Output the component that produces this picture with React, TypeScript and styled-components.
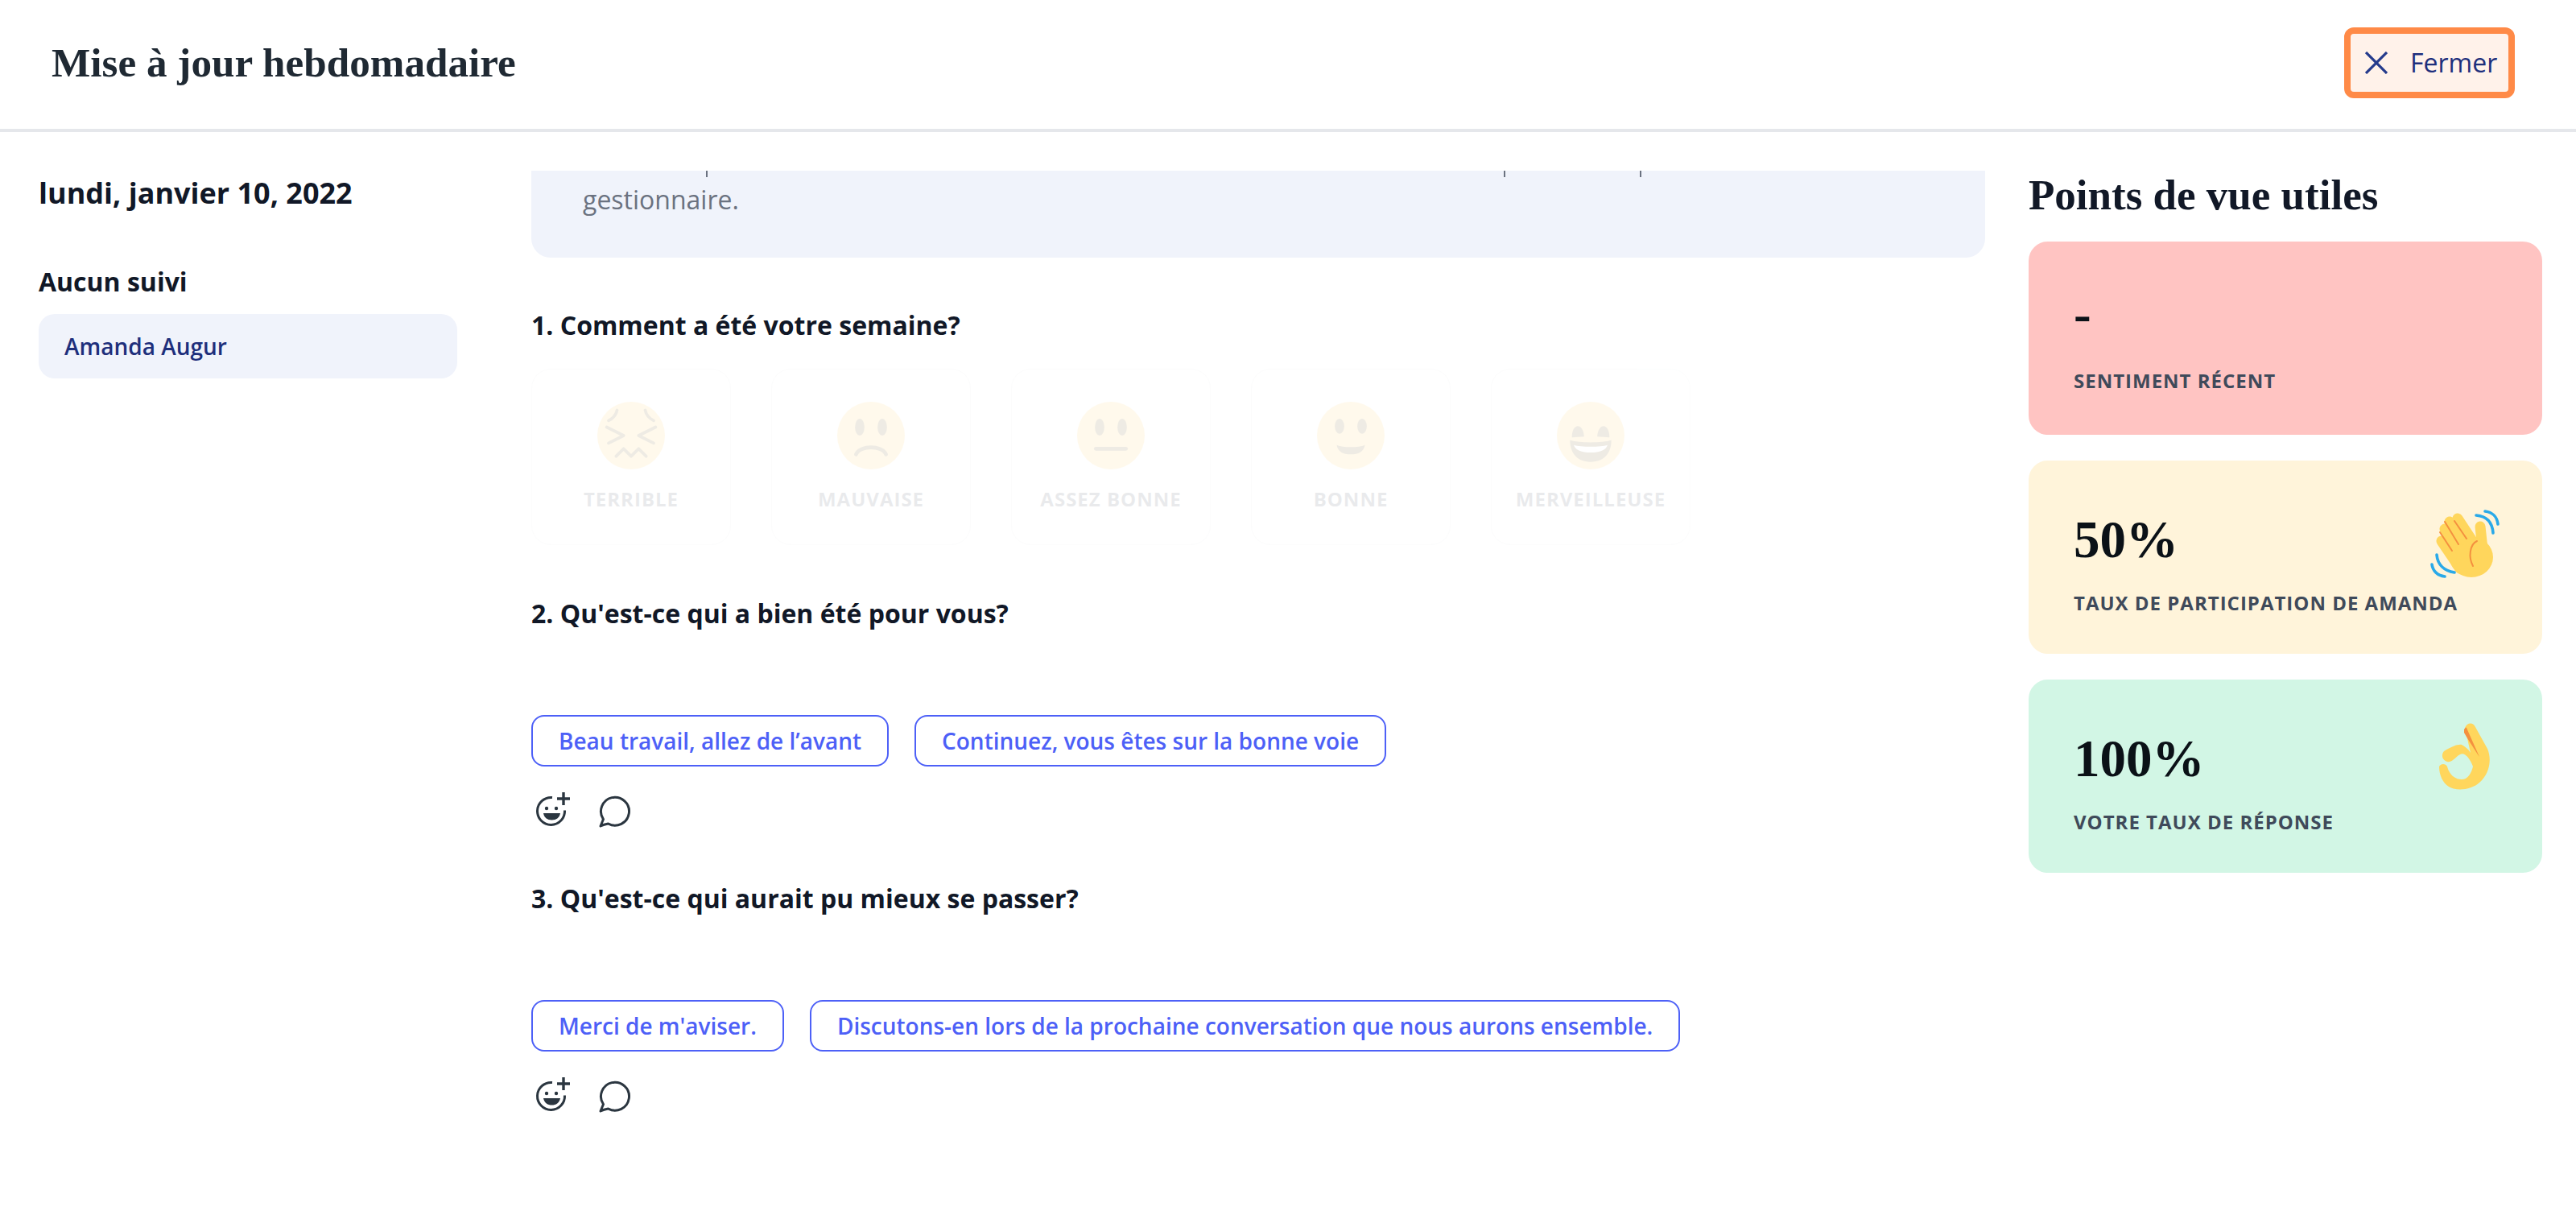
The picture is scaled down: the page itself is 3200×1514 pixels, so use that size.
import React from 'react';
import styled, { createGlobalStyle } from 'styled-components';

const GlobalStyle = createGlobalStyle`
    * {
        box-sizing: border-box;
    }
    html, body {
        margin: 0;
        padding: 0;
        background: #ffffff;
        font-family: "Open Sans", "Noto Sans", sans-serif;
        color: #111827;
    }
`;

const SERIF = `"Liberation Serif", "Times New Roman", serif`;
const NAVY = '#1e2f7c';
const INK = '#2b3640';
const CHIP_BLUE = '#4d60f7';

const Page = styled.div`
    width: 100%;
    height: 1514px;
    overflow: hidden;
    background: #ffffff;
`;

const Header = styled.header`
    display: flex;
    flex-direction: row;
    align-items: center;
    justify-content: space-between;
    height: 164px;
    padding: 0 76px 4px 64px;
    border-bottom: 4px solid #e5e7eb;
`;

const PageTitle = styled.h1`
    margin: 0;
    font-family: ${SERIF};
    font-size: 51.2px;
    font-weight: 700;
    line-height: 64px;
    color: #1f2933;
`;

const CloseButton = styled.button`
    display: flex;
    flex-direction: row;
    align-items: center;
    gap: 28px;
    width: 212px;
    height: 88px;
    padding: 0 0 0 18px;
    border: 8px solid #ff8a47;
    border-radius: 12px;
    background: #fff2ea;
    color: ${NAVY};
    font-family: inherit;
    font-size: 32px;
    font-weight: 500;
    line-height: 44px;
`;

const Main = styled.main`
    display: grid;
    grid-template-columns: 520px 1898px 692px;
    padding-left: 48px;
`;

const Sidebar = styled.aside`
    display: flex;
    flex-direction: column;
    padding-top: 52px;
`;

const DateHeading = styled.h2`
    margin: 0 0 64px;
    font-size: 36px;
    line-height: 48px;
    font-weight: 700;
    color: #111827;
`;

const SectionLabel = styled.h3`
    margin: 0 0 18px;
    font-size: 32px;
    line-height: 44px;
    font-weight: 700;
    color: #111827;
`;

const NameRow = styled.div`
    display: flex;
    align-items: center;
    height: 80px;
    padding: 0 32px;
    border-radius: 20px;
    background: #f0f3fb;
    color: ${NAVY};
    font-size: 28px;
    font-weight: 600;
`;

const Center = styled.section`
    display: flex;
    flex-direction: column;
    margin-left: 92px;
    padding-top: 48px;
`;

const Notice = styled.div`
    height: 108px;
    border-radius: 0 0 24px 24px;
    background: #f0f3fb;
    margin-bottom: 62px;
    color: #6b7280;
`;

const ClippedLine = styled.div`
    display: flex;
    flex-direction: row;
    height: 8px;
`;

const Descender = styled.span<{ $offset: number }>`
    width: 2px;
    height: 8px;
    margin-left: ${(p) => p.$offset}px;
    background: #6b7280;
`;

const NoticeText = styled.p`
    margin: 6px 0 0 64px;
    font-size: 32px;
    line-height: 44px;
    font-weight: 400;
`;

const Question = styled.h3<{ $gap: number }>`
    margin: 0 0 ${(p) => p.$gap}px;
    font-size: 32px;
    line-height: 44px;
    font-weight: 700;
    color: #111827;
`;

const MoodRow = styled.div`
    display: flex;
    flex-direction: row;
    gap: 50px;
    margin-bottom: 63px;
    opacity: 0.1;
`;

const MoodCard = styled.div`
    display: flex;
    flex-direction: column;
    align-items: center;
    width: 248px;
    height: 219px;
    padding-top: 40px;
    border: 1px solid #e5e7eb;
    border-radius: 24px;
`;

const MoodLabel = styled.span`
    margin-top: 20px;
    font-size: 24px;
    line-height: 34px;
    font-weight: 700;
    letter-spacing: 1px;
    text-transform: uppercase;
    color: #374151;
    white-space: nowrap;
`;

const ChipRow = styled.div`
    display: flex;
    flex-direction: row;
    gap: 32px;
    margin-bottom: 32px;
`;

const Chip = styled.button`
    height: 64px;
    padding: 0 32px;
    border: 2px solid ${CHIP_BLUE};
    border-radius: 16px;
    background: #ffffff;
    color: ${CHIP_BLUE};
    font-family: inherit;
    font-size: 28px;
    font-weight: 600;
    white-space: nowrap;
`;

const ActionRow = styled.div`
    display: flex;
    flex-direction: row;
    gap: 36px;
    height: 44px;
    padding-left: 4px;
    margin-bottom: 66px;
`;

const Insights = styled.aside`
    display: flex;
    flex-direction: column;
    gap: 32px;
    margin-left: 54px;
    width: 638px;
    padding-top: 46px;
`;

const InsightsTitle = styled.h2`
    margin: 0 0 -6px;
    font-family: ${SERIF};
    font-size: 53px;
    line-height: 64px;
    font-weight: 700;
    color: #111827;
`;

const InsightCard = styled.div<{ $bg: string }>`
    position: relative;
    display: flex;
    flex-direction: column;
    height: 240px;
    padding: 62px 56px 0;
    border-radius: 24px;
    background: ${(p) => p.$bg};
`;

const InsightValue = styled.div<{ $dash?: boolean }>`
    height: ${(p) => (p.$dash ? 68 : 72)}px;
    margin-top: ${(p) => (p.$dash ? -8 : 0)}px;
    margin-bottom: ${(p) => (p.$dash ? 8 : 0)}px;
    font-family: ${SERIF};
    font-size: 65px;
    line-height: 72px;
    font-weight: 700;
    color: #0b1117;
`;

const InsightLabel = styled.div`
    margin-top: 27px;
    font-size: 24px;
    line-height: 32px;
    font-weight: 700;
    letter-spacing: 1px;
    text-transform: uppercase;
    color: #3f4a5a;
`;

const InsightEmoji = styled.span`
    position: absolute;
    right: 28px;
    top: 38px;
    display: block;
    width: 150px;
    height: 130px;
`;

const CloseIcon = () => (
    <svg width="28" height="28" viewBox="0 0 28 28" fill="none" stroke="#243a8c" strokeWidth="3.2">
        <path d="M1 1 27 27M27 1 1 27" />
    </svg>
);

const Face = ({ children }: { children?: React.ReactNode }) => (
    <svg width="84" height="84" viewBox="0 0 36 36">
        <circle cx="18" cy="18" r="18" fill="#ffcc4d" />
        {children}
    </svg>
);

const FEATURE = '#664500';

const moods = [
    {
        label: 'Terrible',
        face: (
            <g fill="none" stroke={FEATURE} strokeWidth="1.6" strokeLinecap="round" strokeLinejoin="round">
                <path d="M6 10c2-1 4-3 4.5-5.5M30 10c-2-1-4-3-4.5-5.5" />
                <path d="M5 13.5 14 18l-8 4M31 13.5 22 18l8 4" />
                <path d="M10 29l4-4 4 4 4-4 4 4" />
            </g>
        ),
    },
    {
        label: 'Mauvaise',
        face: (
            <>
                <ellipse cx="12" cy="13.5" rx="2.5" ry="4.5" fill={FEATURE} />
                <ellipse cx="24" cy="13.5" rx="2.5" ry="4.5" fill={FEATURE} />
                <path d="M10 28c2-5 14-5 16 0" fill="none" stroke={FEATURE} strokeWidth="2" strokeLinecap="round" />
            </>
        ),
    },
    {
        label: 'Assez bonne',
        face: (
            <>
                <ellipse cx="12" cy="13.5" rx="2.5" ry="4.5" fill={FEATURE} />
                <ellipse cx="24" cy="13.5" rx="2.5" ry="4.5" fill={FEATURE} />
                <rect x="9" y="24" width="18" height="2" rx="1" fill={FEATURE} />
            </>
        ),
    },
    {
        label: 'Bonne',
        face: (
            <>
                <ellipse cx="12" cy="13" rx="2.5" ry="4" fill={FEATURE} />
                <ellipse cx="24" cy="13" rx="2.5" ry="4" fill={FEATURE} />
                <path d="M10.500 23c3 1.500 12 1.500 15 0-.5 3.500-3.500 5-7.500 5s-7-1.500-7.500-5z" fill={FEATURE} />
            </>
        ),
    },
    {
        label: 'Merveilleuse',
        face: (
            <>
                <path d="M8 19c0-8 6-8 6.500-.5zM21.500 18.500c.5-7.500 6.500-7.500 6.500.5z" fill={FEATURE} />
                <path d="M7 20.500c5 1.500 17 1.500 22 0 0 7-4 11.500-11 11.500S7 27.500 7 20.500z" fill={FEATURE} />
                <path d="M9 23c4 1.200 14 1.200 18 0-1 2.800-4 4-9 4s-8-1.200-9-4z" fill="#ffffff" />
            </>
        ),
    },
];

const SmilePlusIcon = () => (
    <svg width="44" height="44" viewBox="0 0 44 44" fill="none">
        <path d="M37.500 22.500A17 17 0 1 1 22 6.500" stroke={INK} strokeWidth="3" />
        <path d="M36 0v16M28 8h16" stroke={INK} strokeWidth="3.400" />
        <circle cx="15" cy="20" r="2.200" fill={INK} />
        <circle cx="27" cy="20" r="2.200" fill={INK} />
        <path d="M11 26h21c-1 6-5.500 8.500-10.500 8.500S12 32 11 26z" fill={INK} />
    </svg>
);

const BubbleIcon = () => (
    <svg width="44" height="44" viewBox="0 0 44 44" fill="none">
        <path
            d="M2 42 5.500 33.500A17.500 17.500 0 1 1 11.500 39Q6 40 2 42z"
            stroke={INK}
            strokeWidth="3"
            strokeLinejoin="round"
        />
    </svg>
);

const WaveEmoji = () => (
    <svg width="150" height="130" viewBox="0 0 150 130" fill="none" strokeLinecap="round">
        <g stroke="#ffd65c" strokeWidth="13">
            <path d="M53 62 76 96" />
            <path d="M57 47 84 86" />
            <path d="M63 38 88 74" />
            <path d="M73 34 94 66" />
            <path d="M101 44 104 72" />
        </g>
        <ellipse cx="90" cy="82" rx="27" ry="25" fill="#ffd65c" />
        <path d="M70 64 92 70 72 92z" fill="#ffd65c" />
        <g stroke="#f4903f" strokeWidth="2">
            <path d="M51 51 66 74" />
            <path d="M57 38 74 66" />
            <path d="M69 37 84 59" />
            <path d="M97 62C88 66 86 82 92 93" />
        </g>
        <g stroke="#2aa9e8" strokeWidth="3.600">
            <path d="M96 30C108 31 116 38 117 52" />
            <path d="M107 25C116 26 122 32 123 41" />
            <path d="M47 79C48 91 56 99 69 101" />
            <path d="M41 91C42 99 48 105 57 106" />
        </g>
    </svg>
);

const OkEmoji = () => (
    <svg width="150" height="130" viewBox="0 0 150 130" fill="none">
        <path
            d="M82 22C85 15 92 15 95 21L110 48C116 62 112 80 100 90 90 99 72 101 62 95 54 90 50 80 50 70 52 66 58 66 60 70 62 78 68 86 78 86 86 86 90 78 92 70 88 60 82 52 76 55 70 58 66 66 60 64 54 62 52 56 56 51 62 47 72 42 78 43 82 45 86 48 89 53Z"
            fill="#ffd65c"
        />
        <path d="M81 24C82 22 84 21 84 22L100 58C95 50 88 40 81 28Z" fill="#f4903f" />
    </svg>
);

const ChipGroup = ({ chips }: { chips: string[] }) => (
    <>
        <ChipRow>
            {chips.map((c) => (
                <Chip key={c}>{c}</Chip>
            ))}
        </ChipRow>
        <ActionRow>
            <SmilePlusIcon />
            <BubbleIcon />
        </ActionRow>
    </>
);

export default function App() {
    return (
        <Page>
            <GlobalStyle />
            <Header>
                <PageTitle>Mise à jour hebdomadaire</PageTitle>
                <CloseButton>
                    <CloseIcon />
                    Fermer
                </CloseButton>
            </Header>
            <Main>
                <Sidebar>
                    <DateHeading>lundi, janvier 10, 2022</DateHeading>
                    <SectionLabel>Aucun suivi</SectionLabel>
                    <NameRow>Amanda Augur</NameRow>
                </Sidebar>
                <Center>
                    <Notice>
                        <ClippedLine>
                            <Descender $offset={217} />
                            <Descender $offset={989} />
                            <Descender $offset={167} />
                        </ClippedLine>
                        <NoticeText>gestionnaire.</NoticeText>
                    </Notice>
                    <Question $gap={32}>1. Comment a été votre semaine?</Question>
                    <MoodRow>
                        {moods.map((m) => (
                            <MoodCard key={m.label}>
                                <Face>{m.face}</Face>
                                <MoodLabel>{m.label}</MoodLabel>
                            </MoodCard>
                        ))}
                    </MoodRow>
                    <Question $gap={104}>2. Qu'est-ce qui a bien été pour vous?</Question>
                    <ChipGroup chips={['Beau travail, allez de l’avant', 'Continuez, vous êtes sur la bonne voie']} />
                    <Question $gap={104}>3. Qu'est-ce qui aurait pu mieux se passer?</Question>
                    <ChipGroup
                        chips={["Merci de m'aviser.", 'Discutons-en lors de la prochaine conversation que nous aurons ensemble.']}
                    />
                </Center>
                <Insights>
                    <InsightsTitle>Points de vue utiles</InsightsTitle>
                    <InsightCard $bg="#ffc4c2">
                        <InsightValue $dash>-</InsightValue>
                        <InsightLabel>Sentiment récent</InsightLabel>
                    </InsightCard>
                    <InsightCard $bg="#fff4da">
                        <InsightValue>50%</InsightValue>
                        <InsightLabel>Taux de participation de Amanda</InsightLabel>
                        <InsightEmoji>
                            <WaveEmoji />
                        </InsightEmoji>
                    </InsightCard>
                    <InsightCard $bg="#d2f6e5">
                        <InsightValue>100%</InsightValue>
                        <InsightLabel>Votre taux de réponse</InsightLabel>
                        <InsightEmoji>
                            <OkEmoji />
                        </InsightEmoji>
                    </InsightCard>
                </Insights>
            </Main>
        </Page>
    );
}
